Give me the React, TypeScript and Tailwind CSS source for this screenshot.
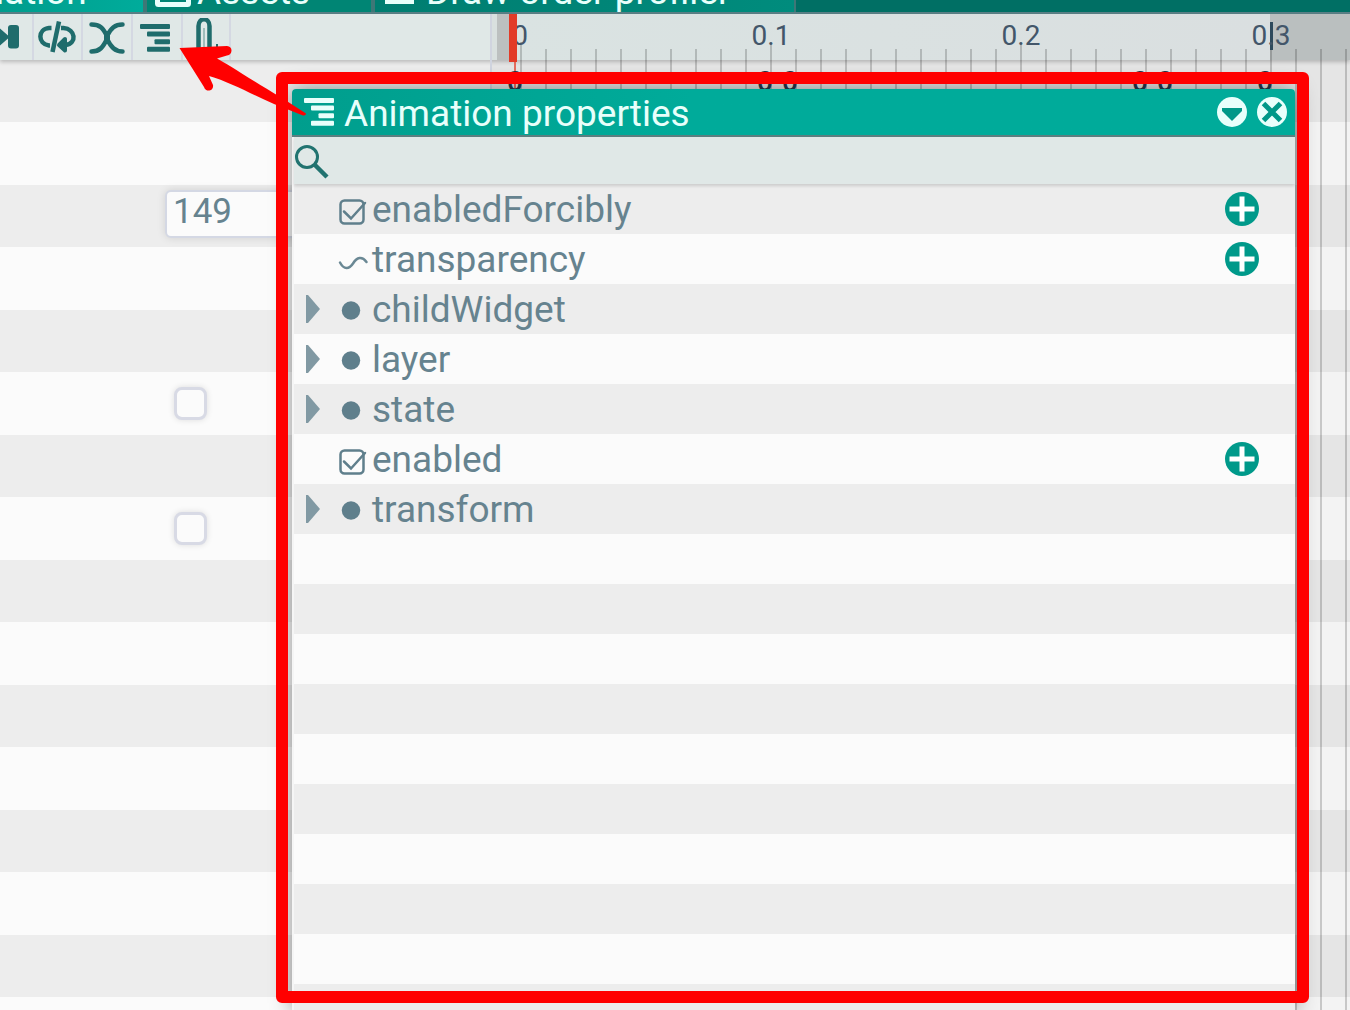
import type { ReactNode } from "react";

type Kind = "check" | "curve" | "group";

const properties: { name: string; kind: Kind }[] = [
  { name: "enabledForcibly", kind: "check" },
  { name: "transparency", kind: "curve" },
  { name: "childWidget", kind: "group" },
  { name: "layer", kind: "group" },
  { name: "state", kind: "group" },
  { name: "enabled", kind: "check" },
  { name: "transform", kind: "group" },
];

const emptyRows = Array.from({ length: 10 }, (_, i) => i);
const backgroundRows = Array.from({ length: 16 }, (_, i) => i);
const gridLines = Array.from({ length: 34 }, (_, i) => i);
const labels = ["0", "0.1", "0.2", "0.3"];
const keyColumns = [0, 10, 11, 25, 26, 30];

function ListIcon({ className }: { className: string }) {
  return (
    <svg viewBox="0 0 30 28" className={className} fill="currentColor" aria-hidden="true">
      <rect x="0" y="0" width="30" height="5" rx="1" />
      <rect x="7" y="7.6" width="23" height="5" rx="1" />
      <rect x="14.500" y="15.200" width="15.500" height="5" rx="1" />
      <rect x="7" y="22.800" width="23" height="5" rx="1" />
    </svg>
  );
}

function EndIcon() {
  return (
    <svg viewBox="0 0 20 26" className="mt-2.5 h-[26px] w-5" fill="#1f6c6c" aria-hidden="true">
      <path d="M0 4.500 L8 11.500 V4 Q8 1 11 1 H16 Q19 1 19 4 V21.500 Q19 24.500 16 24.500 H11 Q8 24.500 8 21.500 V14.500 L0 21.500 Z" />
    </svg>
  );
}

function LoopIcon() {
  return (
    <svg viewBox="0 0 40 34" className="mt-1.5 h-[34px] w-10" fill="none" stroke="#1f6c6c" strokeWidth="4.500" aria-hidden="true">
      <path d="M14.500 8 H12 C0.500 9 0.500 24 12 25.500 H13" />
      <path d="M24 8 H26.500 C38.500 9 40.500 23.500 28.500 25" />
      <path d="M22 1.500 L15.500 32" strokeWidth="4.500" />
      <path d="M28 19 V30.500 L22 25 Z" fill="#1f6c6c" strokeWidth="4" strokeLinejoin="round" />
    </svg>
  );
}

function CrossIcon() {
  return (
    <svg viewBox="0 0 36 32" className="mt-2 h-8 w-9" fill="none" stroke="#1f6c6c" strokeWidth="4.500" strokeLinecap="round" aria-hidden="true">
      <path d="M2.500 2.500 C11 2.500 14 6 18 14 C22 6 26 2.500 33.500 2.500" />
      <path d="M2.500 29.500 C11 29.500 14 25 18 17 C22 25 26 29.500 33.500 29.500" />
      <path d="M18 12 V19" strokeWidth="6" />
    </svg>
  );
}

function ClipIcon() {
  return (
    <svg viewBox="0 0 24 34" className="mt-1 h-[34px] w-6" fill="none" stroke="#1f6c6c" aria-hidden="true">
      <path d="M3.500 34 V8 C3.500 -1 14.500 -1 14.500 8 V34" strokeWidth="4.500" />
      <path d="M9 34 V10" strokeWidth="2" stroke="#9fbdbb" />
      <path d="M22 26 V34" strokeWidth="2" />
    </svg>
  );
}

function ToolButton({ label, width, children }: { label: string; width: string; children: ReactNode }) {
  return (
    <button aria-label={label} className={`flex shrink-0 items-start border-r-2 border-[#d4d8e2] ${width}`}>
      {children}
    </button>
  );
}

function KindIcon({ kind }: { kind: Kind }) {
  if (kind === "group") {
    return (
      <svg viewBox="0 0 34 50" className="h-[50px] w-[34px]" aria-hidden="true">
        <circle cx="13" cy="26.500" r="9.200" fill="#5f7f8c" />
      </svg>
    );
  }
  if (kind === "curve") {
    return (
      <svg viewBox="0 0 34 50" className="h-[50px] w-[34px]" fill="none" stroke="#6a8894" strokeWidth="2.500" strokeLinecap="round" aria-hidden="true">
        <path d="M2 28.500 C6 36 11 35.500 15 29.500 C19 23 24 22 28.500 28" />
      </svg>
    );
  }
  return (
    <svg viewBox="0 0 34 50" className="h-[50px] w-[34px]" fill="none" stroke="#5f7f8c" strokeWidth="2.500" strokeLinecap="round" aria-hidden="true">
      <rect x="2.500" y="16.500" width="23" height="23" rx="4" />
      <path d="M6 27.500 L13 34.500 L27 19" />
    </svg>
  );
}

function AddIcon() {
  return (
    <svg viewBox="0 0 34 34" className="size-[34px]" aria-hidden="true">
      <circle cx="17" cy="17" r="17" fill="#00998a" />
      <path d="M17 4.500 V29.500 M4.500 17 H29.500" stroke="#fff" strokeWidth="5" />
    </svg>
  );
}

function PropertyRow({ name, kind }: { name: string; kind: Kind }) {
  return (
    <li className="flex h-[50px] items-center odd:bg-[#ededed] even:bg-[#fbfbfb]">
      <div className="flex h-full w-11 shrink-0 items-center">
        {kind === "group" && (
          <button aria-label={`Expand ${name}`} className="ml-3">
            <svg viewBox="0 0 14 28" className="h-7 w-3.5" aria-hidden="true">
              <path d="M0 0 H2 L14 14 L2 28 H0 Z" fill="#8199a3" />
            </svg>
          </button>
        )}
      </div>
      <KindIcon kind={kind} />
      <span className="flex-1 pt-0.5 text-[37px] leading-[50px] text-[#66838f]">{name}</span>
      {kind !== "group" && (
        <button aria-label={`Add ${name}`} className="mr-9">
          <AddIcon />
        </button>
      )}
    </li>
  );
}

function Panel() {
  return (
    <section
      aria-label="Animation properties"
      className="absolute top-[89px] right-[55px] bottom-0 left-[292px] overflow-hidden rounded-t bg-[#f5f5f5] shadow-[0_0_22px_rgba(0,0,0,0.45)]"
    >
      <header className="flex h-12 items-center border-b-2 border-[#5c7f80] bg-linear-to-r from-[#009e8d] to-[#00ab9a] to-40% pr-2 pl-3 text-[#e8fffb]">
        <ListIcon className="h-7 w-[30px]" />
        <h1 className="ml-2.5 flex-1 pt-1 text-[37px] leading-[46px] whitespace-nowrap">Animation properties</h1>
        <button aria-label="Panel menu" className="mr-2.5">
          <svg viewBox="0 0 30 30" className="size-[30px]" aria-hidden="true">
            <circle cx="15" cy="15" r="15" fill="#e8fffb" />
            <path d="M5 11 H25 V14 L15 24 L5 14 Z" fill="#009888" />
          </svg>
        </button>
        <button aria-label="Close panel">
          <svg viewBox="0 0 30 30" className="size-[30px]" aria-hidden="true">
            <circle cx="15" cy="15" r="15" fill="#e8fffb" />
            <path d="M6.500 6.500 L23.500 23.500 M23.500 6.500 L6.500 23.500" stroke="#009888" strokeWidth="5" />
          </svg>
        </button>
      </header>
      <label className="relative ml-0.5 flex h-[47px] items-center bg-[#e0e8e7] shadow-[0_2px_3px_rgba(0,0,0,0.14)]">
        <svg viewBox="0 0 36 36" className="h-9 w-9" fill="none" stroke="#217370" aria-hidden="true">
          <circle cx="13" cy="14" r="10.500" strokeWidth="3" />
          <path d="M20 21 L33 34" strokeWidth="4.500" />
        </svg>
        <input type="text" aria-label="Search properties" className="h-full flex-1 bg-transparent text-3xl outline-none" />
      </label>
      <ul className="ml-0.5">
        {properties.map((p) => (
          <PropertyRow key={p.name} name={p.name} kind={p.kind} />
        ))}
        {emptyRows.map((i) => (
          <li key={i} className="h-[50px] odd:bg-[#ededed] even:bg-[#fbfbfb]" />
        ))}
      </ul>
    </section>
  );
}

function BackgroundContent({ index }: { index: number }) {
  if (index === 2) {
    return (
      <input
        aria-label="Value"
        defaultValue="149"
        className="mt-[5px] ml-[165px] h-12 w-60 self-start rounded-md border-2 border-[#d4d8e4] bg-[#fbfbfb] px-1.5 pb-1 text-[35px] text-[#66838f] shadow-[0_0_8px_rgba(0,0,0,0.12)]"
      />
    );
  }
  if (index === 5 || index === 7) {
    return (
      <input
        type="checkbox"
        aria-label={`Option ${index}`}
        className="ml-[174px] size-[33px] appearance-none rounded-lg border-[3px] border-[#d8dae5] bg-[#fbfbfb] shadow-[0_0_6px_rgba(0,0,0,0.12)]"
      />
    );
  }
  return null;
}

function Timeline() {
  return (
    <div className="absolute top-3.5 right-0 bottom-0 left-[490px] overflow-hidden border-l-2 border-[#d0d4df] bg-black/3">
      <div className="ml-[5px] flex h-[46px]">
        <div className="w-3 bg-[#bcc0c0]" />
        <div className="w-[761px] bg-linear-to-r from-[#dae3e2] to-[#dadfe0]" />
        <div className="flex-1 bg-[#babfbf]" />
      </div>
      {gridLines.map((i) => (
        <span
          key={i}
          className={`absolute bottom-0 w-0.5 bg-black/18 ${i % 10 === 0 ? "top-7" : "top-[35px]"}`}
          style={{ left: 28 + i * 25 }}
        />
      ))}
      <span className="absolute top-2 left-[778px] h-7 w-[3px] bg-[#2e4a5c]" />
      <span className="absolute top-0 bottom-0 left-[22px] w-0.5 bg-[#e63a27]/70" />
      {keyColumns.map((k) => (
        <span
          key={k}
          className="absolute top-[52px] w-5 text-center text-[28px] leading-8 font-medium text-[#26384c]"
          style={{ left: 13 + k * 25 }}
        >
          0
        </span>
      ))}
      {labels.map((t, i) => (
        <span
          key={t}
          className="absolute top-1.5 w-[60px] text-center text-[28px] leading-8 text-[#43566a]"
          style={{ left: (i === 0 ? -2 : -1) + i * 250 }}
        >
          {t}
        </span>
      ))}
      <span className="absolute top-0 left-[17px] h-12 w-2 bg-[#e23b28]" />
    </div>
  );
}

export default function App() {
  return (
    <main className="relative h-screen min-h-[700px] overflow-hidden bg-[#fbfbfb] font-['Roboto',sans-serif]">
      <nav className="flex h-3.5 items-end overflow-hidden border-b-2 border-[#5b8087] bg-[#006f64] text-[37px] leading-10 text-[#e8fffb]">
        <button className="flex h-10 w-[143px] shrink-0 items-end bg-linear-to-r from-[#009d8d] to-[#00ac9b]">
          <span className="-ml-[82px]">Animation</span>
        </button>
        <button className="flex h-10 w-[228px] shrink-0 items-end border-l-4 border-[#3f7777] bg-[#008574] pl-2">
          <svg viewBox="0 0 36 34" className="mb-[5px] h-[34px] w-9" fill="none" stroke="currentColor" strokeWidth="5" aria-hidden="true">
            <rect x="2.500" y="2.500" width="31" height="29" rx="1" />
          </svg>
          <span className="ml-1.5">Assets</span>
        </button>
        <button className="flex h-10 w-[425px] shrink-0 items-end border-r-2 border-l-4 border-[#3f7777] bg-linear-to-r from-[#007d70] to-[#008c7d] pl-2.5">
          <span className="mb-2 h-6 w-[29px] bg-[#e8fffb]" />
          <span className="ml-3 whitespace-nowrap">Draw order profiler</span>
        </button>
      </nav>

      <div className="relative flex h-[46px] bg-[#e0e8e7] shadow-[0_2px_4px_rgba(0,0,0,0.22)]">
        <ToolButton label="Go to end" width="w-[34px]">
          <EndIcon />
        </ToolButton>
        <ToolButton label="Toggle loop" width="w-[49px] pl-[3px]">
          <LoopIcon />
        </ToolButton>
        <ToolButton label="Transition" width="w-[50px] pl-1.5">
          <CrossIcon />
        </ToolButton>
        <ToolButton label="Animation properties" width="w-[50px] pl-[7px]">
          <ListIcon className="mt-2.5 h-7 w-[30px] text-[#1f6c6c]" />
        </ToolButton>
        <ToolButton label="Attach" width="w-12 pl-3">
          <ClipIcon />
        </ToolButton>
      </div>

      <div>
        {backgroundRows.map((i) => (
          <div key={i} className="flex items-center odd:h-[62px] odd:bg-[#ededed] even:h-[63px] even:bg-[#fbfbfb]">
            <BackgroundContent index={i} />
          </div>
        ))}
      </div>

      <Timeline />
      <Panel />

      <div className="pointer-events-none absolute top-[72px] right-[41px] bottom-[7px] left-[276px] rounded-md border-12 border-[#ff0000]" />
      <svg viewBox="0 0 130 74" className="pointer-events-none absolute top-[44px] left-[178px] h-[74px] w-[130px]" aria-hidden="true">
        <path
          d="M1.500 4 L49 2 C55 2 55 11 49 11.500 L39 14.500 C48 19 70 34 104 54 L128 69.500 Q128 72 125 71.500 L96 60 C75 51 52 38 31 32 L35 41 C36 47 28 49 26 43 Z"
          fill="#ff0000"
        />
      </svg>
    </main>
  );
}
